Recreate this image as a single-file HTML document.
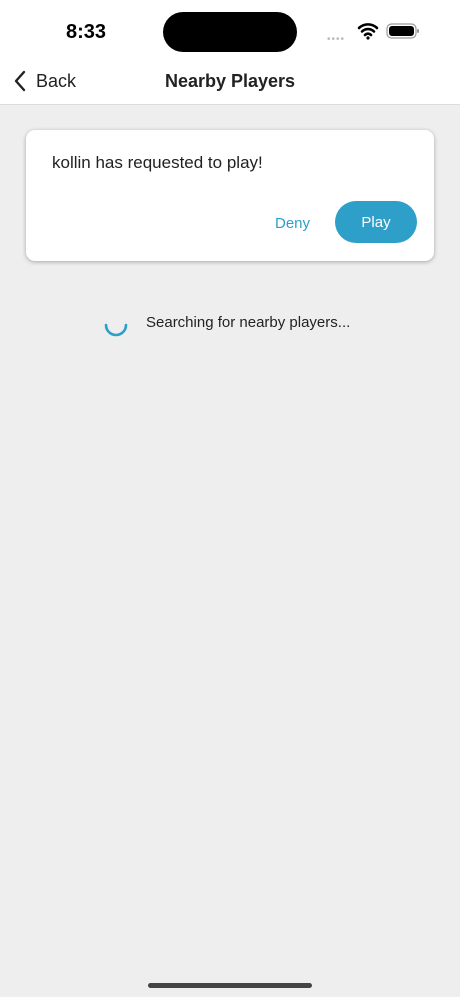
<!DOCTYPE html>
<html><head><style>
body{margin:0;width:460px;height:997px;background:#eeeeee;font-family:"Liberation Sans",sans-serif;position:relative;overflow:hidden}
.hdr{position:absolute;left:0;top:0;width:460px;height:104px;background:#fff;border-bottom:1px solid #dcdcdc}
.time{position:absolute;left:66px;top:21px;font-size:20px;font-weight:bold;color:#000}
.island{position:absolute;left:163px;top:12px;width:134px;height:40px;border-radius:20px;background:#000}
.back{position:absolute;left:36px;top:71px;font-size:18px;color:#222}
.title{position:absolute;left:0;width:460px;text-align:center;top:71px;font-size:18px;font-weight:bold;color:#222}
.card{position:absolute;left:26px;top:130px;width:408px;height:131px;background:#fff;border-radius:9px;box-shadow:0 1px 4px rgba(0,0,0,.3)}
.msg{position:absolute;left:26px;top:23px;font-size:17px;color:#222}
.deny{position:absolute;left:249px;top:85px;font-size:15px;color:#2e9fc8}
.play{position:absolute;left:309px;top:71px;width:82px;height:42px;border-radius:21px;background:#2e9fc8;color:#fff;font-size:15px;text-align:center;line-height:44px}
.search{position:absolute;left:146px;top:314px;font-size:15px;color:#222}
.home{position:absolute;left:148px;top:983px;width:164px;height:5px;border-radius:3px;background:#444}
</style></head><body>
<div class="hdr">
<div class="time">8:33</div>
<div class="island"></div>
<div style="position:absolute;left:327px;top:34px;color:#bbb;font-size:10px;letter-spacing:1px">••••</div>
<svg style="position:absolute;left:357px;top:22px" width="22" height="18" viewBox="0 0 22 18"><path d="M2 6a13 13 0 0 1 18 0M5 9.5a8.5 8.5 0 0 1 12 0M8 13a4 4 0 0 1 6 0" stroke="#000" stroke-width="2.6" fill="none" stroke-linecap="round"/><circle cx="11" cy="16" r="1.6"/></svg>
<svg style="position:absolute;left:386px;top:22px" width="34" height="18" viewBox="0 0 34 18"><rect x="1" y="2" width="29" height="14" rx="4.5" fill="none" stroke="#999" stroke-width="1.2"/><rect x="3" y="4" width="25" height="10" rx="3" fill="#000"/><rect x="31" y="7" width="2" height="4" rx="1" fill="#999"/></svg>
<svg style="position:absolute;left:13px;top:70px" width="14" height="22" viewBox="0 0 14 22"><path d="M11 2L3 11l8 9" stroke="#222" stroke-width="2.4" fill="none" stroke-linecap="round" stroke-linejoin="round"/></svg>
<div class="back">Back</div>
<div class="title">Nearby Players</div>
</div>
<div class="card">
<div class="msg">kollin has requested to play!</div>
<div class="deny">Deny</div>
<div class="play">Play</div>
</div>
<svg style="position:absolute;left:103px;top:313px" width="26" height="26" viewBox="0 0 26 26"><path d="M3 12a10 10 0 0 0 20 0" stroke="#2e9fc8" stroke-width="2.6" fill="none" stroke-linecap="round"/></svg>
<div class="search">Searching for nearby players...</div>
<div class="home"></div>
</body></html>
